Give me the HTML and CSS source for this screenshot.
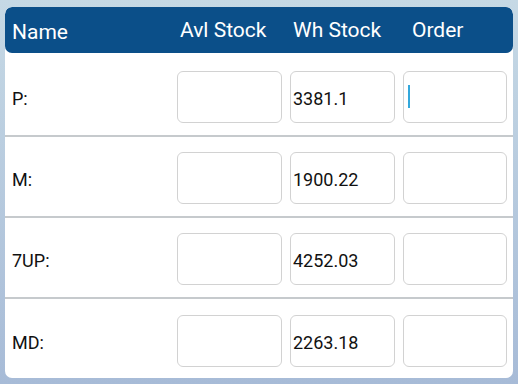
FILE: index.html
```html
<!DOCTYPE html>
<html lang="en">
<head>
    <meta charset="UTF-8">
    <title>Stock Order</title>
    <link rel="stylesheet" href="styles.css">
</head>
<body>
    <div class="card">
        <div class="header">
            <div class="col-name">Name</div>
            <div>Avl Stock</div>
            <div>Wh Stock</div>
            <div class="col-order">Order</div>
        </div>

        <div class="rows">
            <div class="row">
                <span class="label">P:</span>
                <input type="text" class="field">
                <input type="text" class="field" value="3381.1">
                <div class="field-wrap">
                    <input type="text" class="field">
                    <span class="caret"></span>
                </div>
            </div>

            <div class="row">
                <span class="label">M:</span>
                <input type="text" class="field">
                <input type="text" class="field" value="1900.22">
                <input type="text" class="field">
            </div>

            <div class="row">
                <span class="label">7UP:</span>
                <input type="text" class="field">
                <input type="text" class="field" value="4252.03">
                <input type="text" class="field">
            </div>

            <div class="row">
                <span class="label">MD:</span>
                <input type="text" class="field">
                <input type="text" class="field" value="2263.18">
                <input type="text" class="field">
            </div>
        </div>
    </div>
</body>
</html>
```

FILE: styles.css
```css
html, body {
    height: 100%;
}
body {
    margin: 0;
    padding: 7px 5px 0 5px;
    box-sizing: border-box;
    font-family: Roboto, "Liberation Sans", sans-serif;
    background: linear-gradient(to bottom, #c6d9e5, #a7bbd7);
}
.card {
    width: 508px;
    height: 371px;
    background-color: white;
    border-radius: 7px;
    overflow: hidden;
}
.header {
    display: grid;
    grid-template-columns: 1fr 105px 105px 104px;
    column-gap: 8px;
    height: 46px;
    box-sizing: border-box;
    padding: 11px 6px 0 7px;
    background-color: #0b4f89;
    border-radius: 7px;
    color: white;
    font-size: 21px;
    line-height: 24px;
}
.header div {
    padding-left: 3px;
}
.header .col-name {
    padding-left: 0;
    margin-top: 2px;
}
.header .col-order {
    padding-left: 9px;
}
.rows {
    padding-top: 3px;
}
.row {
    display: grid;
    grid-template-columns: 1fr 105px 105px 104px;
    column-gap: 8px;
    align-items: center;
    height: 81px;
    box-sizing: border-box;
    padding: 3px 6px 0 7px;
    border-bottom: 2px solid #c6cacd;
}
.row:last-child {
    border-bottom: none;
}
.label {
    font-size: 18px;
    color: #111;
    padding-top: 3px;
}
.field {
    width: 100%;
    height: 52px;
    box-sizing: border-box;
    margin: 0;
    padding: 3px 0 0 2px;
    border: 1px solid #d2d2d2;
    border-radius: 6px;
    background-color: white;
    font-family: Roboto, "Liberation Sans", sans-serif;
    font-size: 18px;
    color: #111;
    outline: none;
}
.field-wrap {
    position: relative;
}
.caret {
    position: absolute;
    left: 5px;
    top: 14px;
    width: 2px;
    height: 23px;
    background-color: #33a8dc;
}
```
